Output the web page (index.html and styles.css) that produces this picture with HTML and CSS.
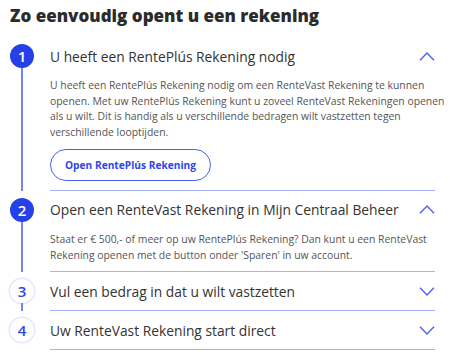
FILE: index.html
```html
<!DOCTYPE html>
<html lang="nl">
<head>
    <meta charset="UTF-8">
    <meta name="viewport" content="width=device-width, initial-scale=1.0">
    <title>Zo eenvoudig opent u een rekening</title>
    <link rel="stylesheet" href="styles.css">
</head>
<body>
    <h1>Zo eenvoudig opent u een rekening</h1>

    <div class="stappen">
        <!-- Stap 1 -->
        <div class="stap">
            <div class="stap-links">
                <span class="nummer actief">1</span>
                <span class="lijn"></span>
            </div>
            <div class="stap-inhoud">
                <div class="stap-kop">
                    <span>U heeft een RentePlús Rekening nodig</span>
                    <svg class="pijl" width="16" height="9" viewBox="0 0 16 9"><path d="M1 8.2 L8 1 L15 8.2" fill="none" stroke="#4a63f2" stroke-width="1.4"/></svg>
                </div>
                <div class="stap-tekst">
                    <p>U heeft een RentePlús Rekening nodig om een RenteVast Rekening te kunnen openen. Met uw RentePlús Rekening kunt u zoveel RenteVast Rekeningen openen als u wilt. Dit is handig als u verschillende bedragen wilt vastzetten tegen verschillende looptijden.</p>
                    <button type="button" class="knop">Open RentePlús Rekening</button>
                </div>
            </div>
        </div>

        <!-- Stap 2 -->
        <div class="stap">
            <div class="stap-links">
                <span class="nummer actief">2</span>
                <span class="lijn"></span>
            </div>
            <div class="stap-inhoud">
                <div class="stap-kop">
                    <span>Open een RenteVast Rekening in Mijn Centraal Beheer</span>
                    <svg class="pijl" width="16" height="9" viewBox="0 0 16 9"><path d="M1 8.2 L8 1 L15 8.2" fill="none" stroke="#4a63f2" stroke-width="1.4"/></svg>
                </div>
                <div class="stap-tekst">
                    <p>Staat er € 500,- of meer op uw RentePlús Rekening? Dan kunt u een RenteVast Rekening openen met de button onder 'Sparen' in uw account.</p>
                </div>
            </div>
        </div>

        <!-- Stap 3 -->
        <div class="stap">
            <div class="stap-links">
                <span class="nummer">3</span>
                <span class="lijn"></span>
            </div>
            <div class="stap-inhoud">
                <div class="stap-kop">
                    <span>Vul een bedrag in dat u wilt vastzetten</span>
                    <svg class="pijl" width="16" height="9" viewBox="0 0 16 9"><path d="M1 0.8 L8 8 L15 0.8" fill="none" stroke="#4a63f2" stroke-width="1.4"/></svg>
                </div>
            </div>
        </div>

        <!-- Stap 4 -->
        <div class="stap">
            <div class="stap-links">
                <span class="nummer">4</span>
            </div>
            <div class="stap-inhoud">
                <div class="stap-kop">
                    <span>Uw RenteVast Rekening start direct</span>
                    <svg class="pijl" width="16" height="9" viewBox="0 0 16 9"><path d="M1 0.8 L8 8 L15 0.8" fill="none" stroke="#4a63f2" stroke-width="1.4"/></svg>
                </div>
            </div>
        </div>
    </div>
</body>
</html>
```

FILE: styles.css
```css
body {
    font-family: "Open Sans", Arial, sans-serif;
    margin: 0;
    padding: 0 15px 0 10px;
    background-color: white;
    color: #333;
}
h1 {
    font-size: 17px;
    font-weight: 800;
    line-height: 24px;
    margin: 4px 0 9px 0;
    color: #2b2b2b;
}
.stap {
    display: flex;
}
.stap-links {
    width: 40px;
    display: flex;
    flex-direction: column;
    align-items: center;
    flex-shrink: 0;
    margin-left: -8px;
}
.nummer {
    width: 24px;
    height: 24px;
    margin-top: 7px;
    border-radius: 50%;
    display: flex;
    justify-content: center;
    align-items: center;
    font-size: 15px;
    font-weight: 600;
    color: #2e46e8;
    background-color: white;
    box-shadow: 0 0 0 1.5px #e4e8fb;
    flex-shrink: 0;
}
.nummer.actief {
    background-color: #2540e6;
    color: white;
    box-shadow: none;
}
.lijn {
    width: 2px;
    flex: 1;
    background-color: #7186f0;
}
.stap-inhoud {
    flex: 1;
    margin-left: 8px;
    border-bottom: 1px solid #a6b3f6;
}
.stap-kop {
    height: 38px;
    display: flex;
    align-items: center;
    justify-content: space-between;
    font-size: 13.8px;
    font-weight: 500;
    color: #333;
}
.stap-tekst {
    padding: 3px 0 8px 0;
}
.stap-tekst p {
    margin: 0 -14px 0 0;
    font-size: 10.4px;
    line-height: 15.7px;
    color: #555;
}
.knop {
    margin: 8px 0 1px 0;
    height: 32px;
    padding: 0 14px;
    border: 1.5px solid #4a63f2;
    border-radius: 16px;
    background-color: white;
    color: #2e46e8;
    font-family: "Open Sans", Arial, sans-serif;
    font-size: 10.2px;
    font-weight: 700;
    cursor: pointer;
}
```
